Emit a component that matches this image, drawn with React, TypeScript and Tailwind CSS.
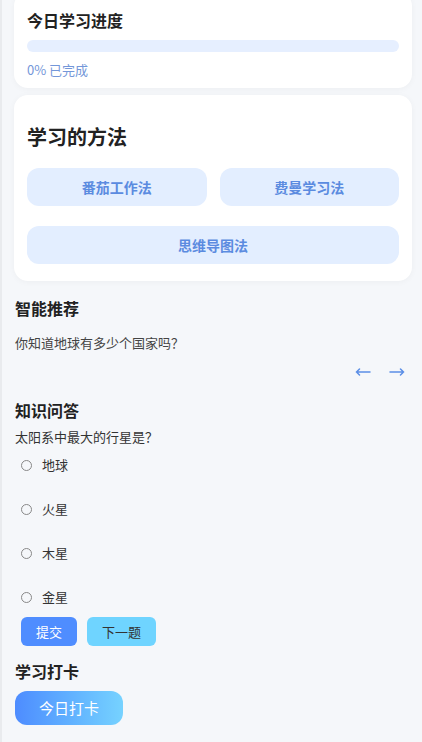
import React, { useState } from "react";

const font = { fontFamily: '"Noto Sans CJK SC", "Noto Sans", sans-serif' };

const methods = ["番茄工作法", "费曼学习法"];
const options = ["地球", "火星", "木星", "金星"];

export default function App() {
  const [choice, setChoice] = useState<string | null>(null);

  return (
    <div style={font} className="h-[742px] overflow-hidden bg-[#f5f7fa] border-l-2 border-[#e9ebee] text-[#222]">
      {/* Today's progress */}
      <section className="ml-[12px] mr-[10px] -mt-[8px] bg-white rounded-[14px] shadow-[0_1px_6px_rgba(0,0,0,0.04)] px-[13px] pt-[16px] pb-[8px]">
        <h2 className="text-[16px] leading-[24px] font-bold">今日学习进度</h2>
        <div className="mt-[8px] h-[12px] rounded-full bg-[#e6efff]"></div>
        <p className="mt-[8px] text-[13px] leading-[20px] text-[#7497d9]">0% 已完成</p>
      </section>

      {/* Methods */}
      <section className="ml-[12px] mr-[10px] mt-[7px] bg-white rounded-[14px] shadow-[0_1px_6px_rgba(0,0,0,0.04)] px-[13px] pt-[28px] pb-[17px]">
        <h2 className="text-[20px] leading-[28px] font-bold">学习的方法</h2>
        <div className="mt-[17px] grid grid-cols-2 gap-x-[13px] gap-y-[20px]">
          {methods.map((m) => (
            <button key={m} className="h-[38px] rounded-[12px] bg-[#e3eeff] text-[14px] font-bold text-[#5b8be0]">
              {m}
            </button>
          ))}
          <button className="col-span-2 h-[38px] rounded-[12px] bg-[#e3eeff] text-[14px] font-bold text-[#5b8be0]">
            思维导图法
          </button>
        </div>
      </section>

      {/* Recommendations */}
      <section className="px-[13px] mt-[15px]">
        <h3 className="text-[16px] leading-[24px] font-bold">智能推荐</h3>
        <p className="mt-[13px] text-[13px] leading-[20px] text-[#444]">你知道地球有多少个国家吗？</p>
        <div className="flex justify-end gap-[18px] pr-[4px] mt-[9px] h-[20px] items-center text-[#5b8ee6]">
          <svg width="16" height="8" viewBox="0 0 16 8" fill="none" stroke="currentColor" strokeWidth="1.5" strokeLinecap="round">
            <path d="M15 4H1.5M4.5 1L1.5 4l3 3" />
          </svg>
          <svg width="16" height="8" viewBox="0 0 16 8" fill="none" stroke="currentColor" strokeWidth="1.5" strokeLinecap="round">
            <path d="M1 4h13.5M11.5 1l3 3-3 3" />
          </svg>
        </div>
      </section>

      {/* Quiz */}
      <section className="px-[13px] mt-[16px]">
        <h3 className="text-[16px] leading-[24px] font-bold">知识问答</h3>
        <p className="mt-[5px] text-[13px] leading-[20px] text-[#333]">太阳系中最大的行星是？</p>
        <div className="flex flex-col pl-[6px] mt-[8px] gap-[24px]">
          {options.map((o) => (
            <label key={o} className="flex items-center gap-[10px] h-[20px] text-[13px] text-[#333] cursor-pointer">
              <span
                onClick={() => setChoice(o)}
                className={`w-[11px] h-[11px] rounded-full border ${choice === o ? "border-[#4e8cff] border-[3px]" : "border-[#888]"}`}
              ></span>
              {o}
            </label>
          ))}
        </div>
        <div className="flex gap-[10px] pl-[6px] mt-[10px]">
          <button className="w-[56px] h-[29px] rounded-[6px] bg-[#4f8dff] text-white text-[13px]">提交</button>
          <button className="w-[69px] h-[29px] rounded-[6px] bg-[#6fd4ff] text-[#333] text-[13px]">下一题</button>
        </div>
      </section>

      {/* Check-in */}
      <section className="px-[13px] mt-[13px]">
        <h3 className="text-[16px] leading-[24px] font-bold">学习打卡</h3>
        <button className="mt-[8px] w-[108px] h-[34px] rounded-[12px] bg-gradient-to-r from-[#4e8cff] to-[#76d2ff] text-white text-[15px]">
          今日打卡
        </button>
      </section>
    </div>
  );
}
